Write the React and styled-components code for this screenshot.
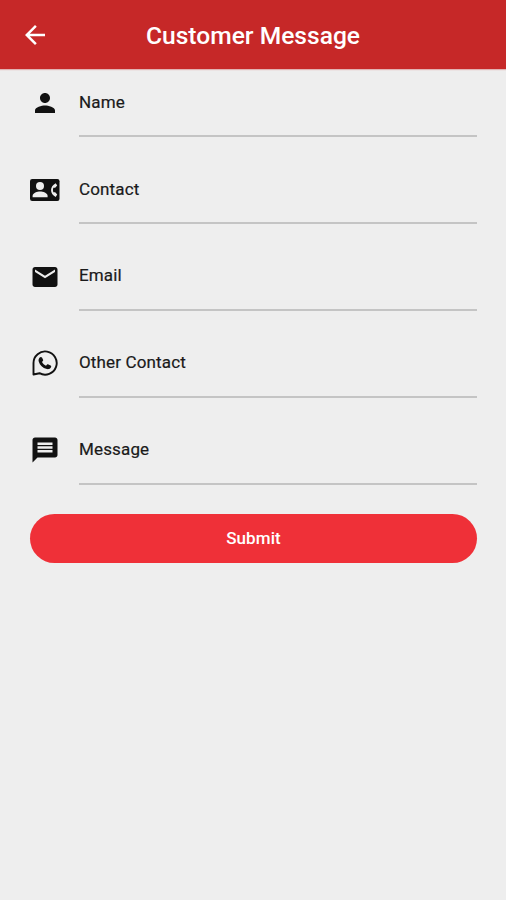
import React from 'react';
import styled, { createGlobalStyle } from 'styled-components';
import { MdArrowBack, MdEmail, MdMessage, MdPerson } from 'react-icons/md';

const GlobalStyle = createGlobalStyle`
  * {
    box-sizing: border-box;
  }

  body {
    margin: 0;
    background: #eeeeee;
    font-family: Roboto, sans-serif;
  }
`;

const Screen = styled.div`
  min-height: 900px;
  background: #eeeeee;
`;

const Header = styled.header`
  display: grid;
  grid-template-columns: 46px 1fr 46px;
  align-items: center;
  height: 69px;
  padding: 2px 12px 0;
  background: #c62828;
  color: #fff;
  box-shadow: 0 1px 1px rgba(198, 40, 40, 0.3);
`;

const BackButton = styled.button`
  display: flex;
  align-items: center;
  justify-content: center;
  height: 46px;
  padding: 0 0 2px;
  border: 0;
  background: none;
  color: inherit;
`;

const Title = styled.h1`
  margin: 0;
  font-size: 24.6px;
  font-weight: 500;
  line-height: 30px;
  text-align: center;
`;

const Form = styled.form`
  padding: 10px 29px 0 30px;
`;

const Field = styled.div`
  display: flex;
  height: 87px;
`;

const FieldIcon = styled.span`
  display: flex;
  align-items: center;
  justify-content: center;
  flex: none;
  width: 30px;
  height: ${({ $height }) => $height || 48}px;
  color: #111;
`;

const FieldLabel = styled.label`
  flex: 1;
  height: 58px;
  margin-left: 19px;
  padding-top: ${({ $raised }) => ($raised ? '12px' : '13px')};
  border-bottom: 2px solid #c4c4c4;
  color: #1a1a1a;
  font-size: 17px;
  font-weight: 400;
  letter-spacing: 0.15px;
  line-height: 20px;
  -webkit-text-stroke: 0.2px #1a1a1a;
`;

const SubmitButton = styled.button`
  display: block;
  width: 100%;
  height: 49px;
  padding: 0 0 2px;
  border: 0;
  border-radius: 25px;
  background: #ef3038;
  color: #fff;
  font-family: inherit;
  font-size: 17px;
  font-weight: 500;
  letter-spacing: 0.1px;
`;

const ContactCardIcon = ({ size }) => (
  <svg width={size} height={size} viewBox="0 0 30 30">
    <rect x="0" y="4" width="29.500" height="22" rx="2.200" fill="currentColor" />
    <g fill="#eee">
      <circle cx="10" cy="11" r="4" />
      <path d="M2.600 22.300v-1.500c0-2.800 4.700-4.300 7.500-4.300s7.500 1.500 7.500 4.300v1.500z" />
      <path d="M25.700 8.200l1.500 2.300-2 2.300h-1.900c-.5 1.500-.5 3 0 4.500h1.900l2 2.300-1.500 2.300c-6.200-3.200-6.200-10.500 0-13.700z" />
    </g>
  </svg>
);

const ChatPhoneIcon = ({ size }) => (
  <svg width={size} height={size} viewBox="0 0 26 26" fill="none">
    <path
      d="M1.500 24.500V13A11.600 11.600 0 1 1 7.500 23.200z"
      stroke="currentColor"
      strokeWidth="1.900"
      strokeLinejoin="round"
    />
    <path
      d="M7.700 7.500c.6-.7 1.900-.8 2.400.2l1 2.100c.2.5.1.9-.3 1.300l-.8 1c1 1.700 2.200 2.900 4 3.700l1.100-1.200c.4-.4.8-.5 1.300-.2l2.200 1.200c.6.3.7.8.5 1.400-.7 1.700-2.500 2.500-4.300 2.100-4.200-1-6.900-3.900-8-7.300-.5-1.600-.2-3.200.9-4.300z"
      fill="currentColor"
    />
  </svg>
);

const FIELDS = [
  { label: 'Name', Icon: MdPerson, size: 30 },
  { label: 'Contact', Icon: ContactCardIcon, size: 30 },
  { label: 'Email', Icon: MdEmail, size: 30, raised: true },
  { label: 'Other Contact', Icon: ChatPhoneIcon, size: 26, iconHeight: 46, raised: true },
  { label: 'Message', Icon: MdMessage, size: 30, iconHeight: 46, raised: true },
];

const App = () => (
  <Screen>
    <GlobalStyle />
    <Header>
      <BackButton type="button" aria-label="Back">
        <MdArrowBack size={30} />
      </BackButton>
      <Title>Customer Message</Title>
    </Header>
    <Form>
      {FIELDS.map(({ label, Icon, size, iconHeight, raised }) => (
        <Field key={label}>
          <FieldIcon $height={iconHeight}>
            <Icon size={size} />
          </FieldIcon>
          <FieldLabel $raised={raised}>{label}</FieldLabel>
        </Field>
      ))}
      <SubmitButton type="button">Submit</SubmitButton>
    </Form>
  </Screen>
);

export default App;
